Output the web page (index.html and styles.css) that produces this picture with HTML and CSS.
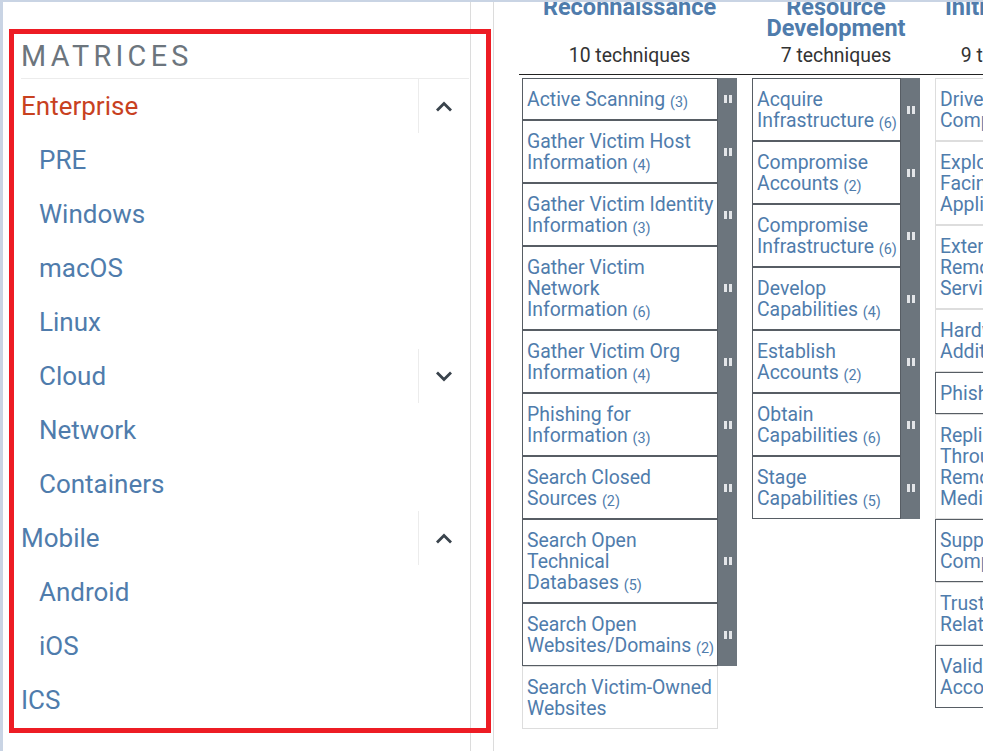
FILE: index.html
```html
<!DOCTYPE html>
<html lang="en">
<head>
    <meta charset="UTF-8">
    <meta name="viewport" content="width=device-width, initial-scale=1.0">
    <title>ATT&amp;CK Matrix</title>
    <link rel="stylesheet" href="styles.css">
</head>
<body>
    <div class="page">
        <nav class="sidebar">
            <div class="sb-title">MATRICES</div>
            <div class="sb-row">
                <a class="sb-link active">Enterprise</a>
                <span class="sb-toggle"><svg width="18" height="11" viewBox="0 0 18 11"><polyline points="2,9.5 9,2.5 16,9.5"/></svg></span>
            </div>
            <div class="sb-row sub"><a class="sb-link">PRE</a></div>
            <div class="sb-row sub"><a class="sb-link">Windows</a></div>
            <div class="sb-row sub"><a class="sb-link">macOS</a></div>
            <div class="sb-row sub"><a class="sb-link">Linux</a></div>
            <div class="sb-row sub">
                <a class="sb-link">Cloud</a>
                <span class="sb-toggle"><svg width="18" height="11" viewBox="0 0 18 11"><polyline points="2,1.5 9,8.5 16,1.5"/></svg></span>
            </div>
            <div class="sb-row sub"><a class="sb-link">Network</a></div>
            <div class="sb-row sub"><a class="sb-link">Containers</a></div>
            <div class="sb-row">
                <a class="sb-link">Mobile</a>
                <span class="sb-toggle"><svg width="18" height="11" viewBox="0 0 18 11"><polyline points="2,9.5 9,2.5 16,9.5"/></svg></span>
            </div>
            <div class="sb-row sub"><a class="sb-link">Android</a></div>
            <div class="sb-row sub"><a class="sb-link">iOS</a></div>
            <div class="sb-row"><a class="sb-link">ICS</a></div>
        </nav>
        <div class="gutter"></div>
        <main class="main">
            <div class="matrix">
                <div class="tactics-head">
                    <div class="tactic col-wide">
                        <div class="tactic-name">Reconnaissance</div>
                        <div class="tactic-count">10 techniques</div>
                    </div>
                    <div class="tactic col-mid">
                        <div class="tactic-name">Resource<br>Development</div>
                        <div class="tactic-count">7 techniques</div>
                    </div>
                    <div class="tactic col-narrow">
                        <div class="tactic-name">Initial Access</div>
                        <div class="tactic-count">9 techniques</div>
                    </div>
                </div>
                <div class="tactics-body">
                    <div class="col col-wide">
                        <div class="tech-row"><div class="tech sub">Active Scanning&nbsp;<span class="count">(3)</span></div><div class="handle"></div></div>
                        <div class="tech-row"><div class="tech sub">Gather Victim Host<br>Information&nbsp;<span class="count">(4)</span></div><div class="handle"></div></div>
                        <div class="tech-row"><div class="tech sub">Gather Victim Identity<br>Information&nbsp;<span class="count">(3)</span></div><div class="handle"></div></div>
                        <div class="tech-row"><div class="tech sub">Gather Victim<br>Network<br>Information&nbsp;<span class="count">(6)</span></div><div class="handle"></div></div>
                        <div class="tech-row"><div class="tech sub">Gather Victim Org<br>Information&nbsp;<span class="count">(4)</span></div><div class="handle"></div></div>
                        <div class="tech-row"><div class="tech sub">Phishing for<br>Information&nbsp;<span class="count">(3)</span></div><div class="handle"></div></div>
                        <div class="tech-row"><div class="tech sub">Search Closed<br>Sources&nbsp;<span class="count">(2)</span></div><div class="handle"></div></div>
                        <div class="tech-row"><div class="tech sub">Search Open<br>Technical<br>Databases&nbsp;<span class="count">(5)</span></div><div class="handle"></div></div>
                        <div class="tech-row"><div class="tech sub">Search Open<br>Websites/Domains&nbsp;<span class="count">(2)</span></div><div class="handle"></div></div>
                        <div class="tech-row"><div class="tech">Search Victim-Owned<br>Websites</div></div>
                    </div>
                    <div class="col col-mid">
                        <div class="tech-row"><div class="tech sub">Acquire<br>Infrastructure&nbsp;<span class="count">(6)</span></div><div class="handle"></div></div>
                        <div class="tech-row"><div class="tech sub">Compromise<br>Accounts&nbsp;<span class="count">(2)</span></div><div class="handle"></div></div>
                        <div class="tech-row"><div class="tech sub">Compromise<br>Infrastructure&nbsp;<span class="count">(6)</span></div><div class="handle"></div></div>
                        <div class="tech-row"><div class="tech sub">Develop<br>Capabilities&nbsp;<span class="count">(4)</span></div><div class="handle"></div></div>
                        <div class="tech-row"><div class="tech sub">Establish<br>Accounts&nbsp;<span class="count">(2)</span></div><div class="handle"></div></div>
                        <div class="tech-row"><div class="tech sub">Obtain<br>Capabilities&nbsp;<span class="count">(6)</span></div><div class="handle"></div></div>
                        <div class="tech-row"><div class="tech sub">Stage<br>Capabilities&nbsp;<span class="count">(5)</span></div><div class="handle"></div></div>
                    </div>
                    <div class="col col-narrow">
                        <div class="tech-row"><div class="tech">Drive-by<br>Compromise</div></div>
                        <div class="tech-row"><div class="tech">Exploit Public-<br>Facing<br>Application</div></div>
                        <div class="tech-row"><div class="tech">External<br>Remote<br>Services</div></div>
                        <div class="tech-row"><div class="tech">Hardware<br>Additions</div></div>
                        <div class="tech-row"><div class="tech sub">Phishing&nbsp;<span class="count">(3)</span></div><div class="handle"></div></div>
                        <div class="tech-row"><div class="tech">Replication<br>Through<br>Removable<br>Media</div></div>
                        <div class="tech-row"><div class="tech sub">Supply Chain<br>Compromise&nbsp;<span class="count">(3)</span></div><div class="handle"></div></div>
                        <div class="tech-row"><div class="tech">Trusted<br>Relationship</div></div>
                        <div class="tech-row"><div class="tech sub">Valid<br>Accounts&nbsp;<span class="count">(4)</span></div><div class="handle"></div></div>
                    </div>
                </div>
            </div>
        </main>
    </div>
    <div class="highlight"></div>
</body>
</html>
```

FILE: styles.css
```css
html, body {
    height: 100%;
}
body {
    margin: 0;
    overflow: hidden;
    background: #fff;
    border-top: 2px solid #c9d4e4;
    border-left: 3px solid #c9d4e4;
    box-sizing: border-box;
    font-family: Roboto, "Liberation Sans", sans-serif;
}
.page {
    display: flex;
    height: 100%;
}

/* left menu */
.sidebar {
    width: 468px;
    flex: none;
    box-sizing: border-box;
    padding: 37px 1px 0 18px;
    border-right: 1px solid #dcdcdc;
}
.sb-title {
    height: 40px;
    box-sizing: border-box;
    border-bottom: 1px solid #ececec;
    font-size: 28.8px;
    line-height: 34px;
    letter-spacing: 4.3px;
    color: #6c757d;
}
.sb-row {
    display: flex;
    align-items: center;
    height: 54px;
}
.sb-row.sub {
    padding-left: 18px;
}
.sb-link {
    flex: 1;
    font-size: 26px;
    color: #4f7cac;
}
.sb-link.active {
    color: #c8411f;
}
.sb-toggle {
    width: 51px;
    height: 54px;
    box-sizing: border-box;
    border-left: 1px solid #ececec;
    display: flex;
    align-items: center;
    justify-content: center;
}
.sb-toggle svg {
    fill: none;
    stroke: #39434c;
    stroke-width: 2.8;
}
.gutter {
    width: 23px;
    flex: none;
    box-sizing: border-box;
    border-right: 1px solid #dcdcdc;
}

/* matrix */
.main {
    flex: 1;
    overflow: hidden;
}
.matrix {
    width: 800px;
    margin: -5px 0 0 25px;
}
.tactics-head {
    display: flex;
    gap: 15px;
    padding: 0 0 8px 3px;
    border-bottom: 1px solid #222;
}
.tactics-body {
    display: flex;
    align-items: flex-start;
    gap: 15px;
    padding: 3px 0 0 3px;
}
.col-wide { width: 215px; }
.col-mid { width: 168px; }
.col-narrow { width: 162px; }
.tactic {
    flex: none;
    text-align: center;
}
.tactic-name {
    height: 42px;
    font-size: 23.5px;
    font-weight: 700;
    line-height: 21px;
    color: #4f7cac;
}
.tactic-count {
    margin-top: 6px;
    font-size: 19.4px;
    line-height: 21px;
    color: #333;
}
.col {
    flex: none;
}
.tech-row {
    display: flex;
}
.tech {
    flex: none;
    box-sizing: border-box;
    padding: 10px 1px 9px 4px;
    border: 1px solid #ddd;
    font-size: 19.4px;
    line-height: 21px;
    white-space: nowrap;
    color: #4f7cac;
}
.col-wide .tech { width: 196px; }
.col-mid .tech { width: 149px; }
.col-narrow .tech { width: 143px; }
.tech.sub {
    border-color: #575d64;
}
.count {
    position: relative;
    top: 1px;
    font-size: 14.4px;
    line-height: 1;
}
.handle {
    width: 19px;
    flex: none;
    background: #6c757d;
    display: flex;
    align-items: center;
    justify-content: center;
}
.handle::before {
    content: "";
    width: 2px;
    height: 8px;
    border-left: 3px solid #e3e5e8;
    border-right: 3px solid #e3e5e8;
}

/* red annotation frame */
.highlight {
    position: absolute;
    left: 9px;
    top: 29px;
    width: 482px;
    height: 704px;
    box-sizing: border-box;
    border: 5px solid #ed1c24;
}
```
